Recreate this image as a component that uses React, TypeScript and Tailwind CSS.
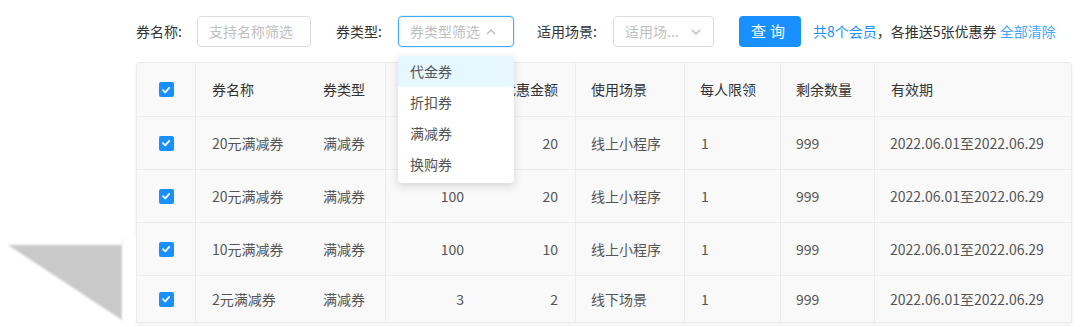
import React from "react";

const rows = [
	{ name: "20元满减券", type: "满减券", min: "100", off: "20", scene: "线上小程序" },
	{ name: "20元满减券", type: "满减券", min: "100", off: "20", scene: "线上小程序" },
	{ name: "10元满减券", type: "满减券", min: "100", off: "10", scene: "线上小程序" },
	{ name: "2元满减券", type: "满减券", min: "3", off: "2", scene: "线下场景" },
];

const Check = () => (
	<span className="flex h-[15px] w-[15px] items-center justify-center rounded-[2px] bg-[#1890ff]">
		<svg width="10" height="10" viewBox="0 0 10 10">
			<path d="M2 5.2 L4.2 7.3 L8.2 2.9" fill="none" stroke="#fff" strokeWidth="1.8" strokeLinecap="round" strokeLinejoin="round" />
		</svg>
	</span>
);

const Chevron = ({ up }: { up?: boolean }) => (
	<svg width="12" height="12" viewBox="0 0 12 12">
		<path d={up ? "M2 8 L6 4 L10 8" : "M2 4 L6 8 L10 4"} fill="none" stroke="#b3b3b3" strokeWidth="1.1" />
	</svg>
);

const grid = "grid grid-cols-[58px_112px_78px_95px_95px_109px_96px_94px_199px]";

const App = () => {
	return (
		<div className="relative h-[327px] w-[1080px] overflow-hidden bg-white font-['Noto_Sans_CJK_SC','Noto_Sans',sans-serif] text-[14px]">
			{/* filter bar */}
			<div className="flex h-[31px] items-center pl-[136px] pt-0 mt-[16px]">
				<span className="w-[61px] text-[#333]">券名称:</span>
				<div className="flex h-[31px] w-[114px] items-center rounded-[4px] border border-[#dcdcdc] pl-[11px] text-[#c0c0c0]">
					支持名称筛选
				</div>
				<span className="ml-[25px] w-[62px] text-[#333]">券类型:</span>
				<div className="flex h-[31px] w-[116px] items-center justify-between rounded-[4px] border border-[#40a9ff] pl-[11px] pr-[16px] text-[#c0c0c0] shadow-[0_0_0_1px_rgba(24,144,255,0.12)]">
					券类型筛选
					<Chevron up />
				</div>
				<span className="ml-[23px] w-[76px] text-[#333]">适用场景:</span>
				<div className="flex h-[31px] w-[101px] items-center justify-between rounded-[4px] border border-[#dcdcdc] pl-[11px] pr-[11px] text-[#c0c0c0]">
					适用场...
					<Chevron />
				</div>
				<button className="ml-[25px] h-[31px] w-[62px] rounded-[4px] bg-[#1890ff] text-[15px] tracking-[4px] text-white">
					查询
				</button>
				<span className="ml-[12px] text-[#1890ff]">
					共8个会员
					<span className="text-[#333]">，各推送5张优惠券 </span>
					<span className="text-[#40a9ff]">全部清除</span>
				</span>
			</div>

			{/* table */}
			<div className="ml-[136px] mt-[15px] w-[936px] overflow-hidden rounded-t-[4px] border border-[#ececec] bg-[#f9f9f9] shadow-[0_2px_4px_rgba(0,0,0,0.06)]">
				<div className={`${grid} h-[54px] items-stretch border-b border-[#ececec] text-[#333]`}>
					<div className="flex items-center justify-center"><Check /></div>
					<div className="flex items-center border-l border-[#ececec] pl-[16px]">券名称</div>
					<div className="flex items-center pl-[16px]">券类型</div>
					<div className="flex items-center justify-end border-l border-[#ececec] pr-[16px]">使用门槛</div>
					<div className="flex items-center justify-end pr-[17px]">优惠金额</div>
					<div className="flex items-center border-l border-[#ececec] pl-[15px]">使用场景</div>
					<div className="flex items-center border-l border-[#ececec] pl-[15px]">每人限领</div>
					<div className="flex items-center border-l border-[#ececec] pl-[15px]">剩余数量</div>
					<div className="flex items-center border-l border-[#ececec] pl-[16px]">有效期</div>
				</div>
				{rows.map((r, i) => (
					<div
						key={i}
						className={`${grid} ${i === 3 ? "h-[46px]" : "h-[53px] border-b border-[#ececec]"} text-[#555]`}
					>
						<div className="flex items-center justify-center"><Check /></div>
						<div className="flex items-center border-l border-[#ececec] pl-[16px]">{r.name}</div>
						<div className="flex items-center pl-[16px]">{r.type}</div>
						<div className="flex items-center justify-end border-l border-[#ececec] pr-[16px]">{r.min}</div>
						<div className="flex items-center justify-end pr-[17px]">{r.off}</div>
						<div className="flex items-center border-l border-[#ececec] pl-[15px]">{r.scene}</div>
						<div className="flex items-center border-l border-[#ececec] pl-[16px]">1</div>
						<div className="flex items-center border-l border-[#ececec] pl-[15px]">999</div>
						<div className="flex items-center border-l border-[#ececec] pl-[15px]">2022.06.01至2022.06.29</div>
					</div>
				))}
			</div>

			{/* dropdown */}
			<div className="absolute left-[398px] top-[56px] w-[116px] overflow-hidden rounded-[4px] bg-white pb-[3px] text-[#555] shadow-[0_3px_8px_rgba(0,0,0,0.15)]">
				<div className="flex h-[31px] items-center bg-[#e6f7ff] pl-[12px]">代金券</div>
				<div className="flex h-[31px] items-center pl-[12px]">折扣券</div>
				<div className="flex h-[31px] items-center pl-[12px]">满减券</div>
				<div className="flex h-[31px] items-center pl-[12px]">换购券</div>
			</div>

			{/* curled page shadow */}
			<svg className="absolute left-0 top-[238px]" width="136" height="89" viewBox="0 0 136 89">
				<defs>
					<filter id="b" x="-10%" y="-10%" width="120%" height="120%">
						<feGaussianBlur stdDeviation="1.2" />
					</filter>
				</defs>
				<polygon points="8,7 122,7 122,82" fill="#c9c9c9" filter="url(#b)" />
				<rect x="122" y="0" width="14" height="83" fill="#fff" />
				<line x1="122.5" y1="0" x2="122.5" y2="83" stroke="#f0f0f0" />
			</svg>
		</div>
	);
};

export default App;
